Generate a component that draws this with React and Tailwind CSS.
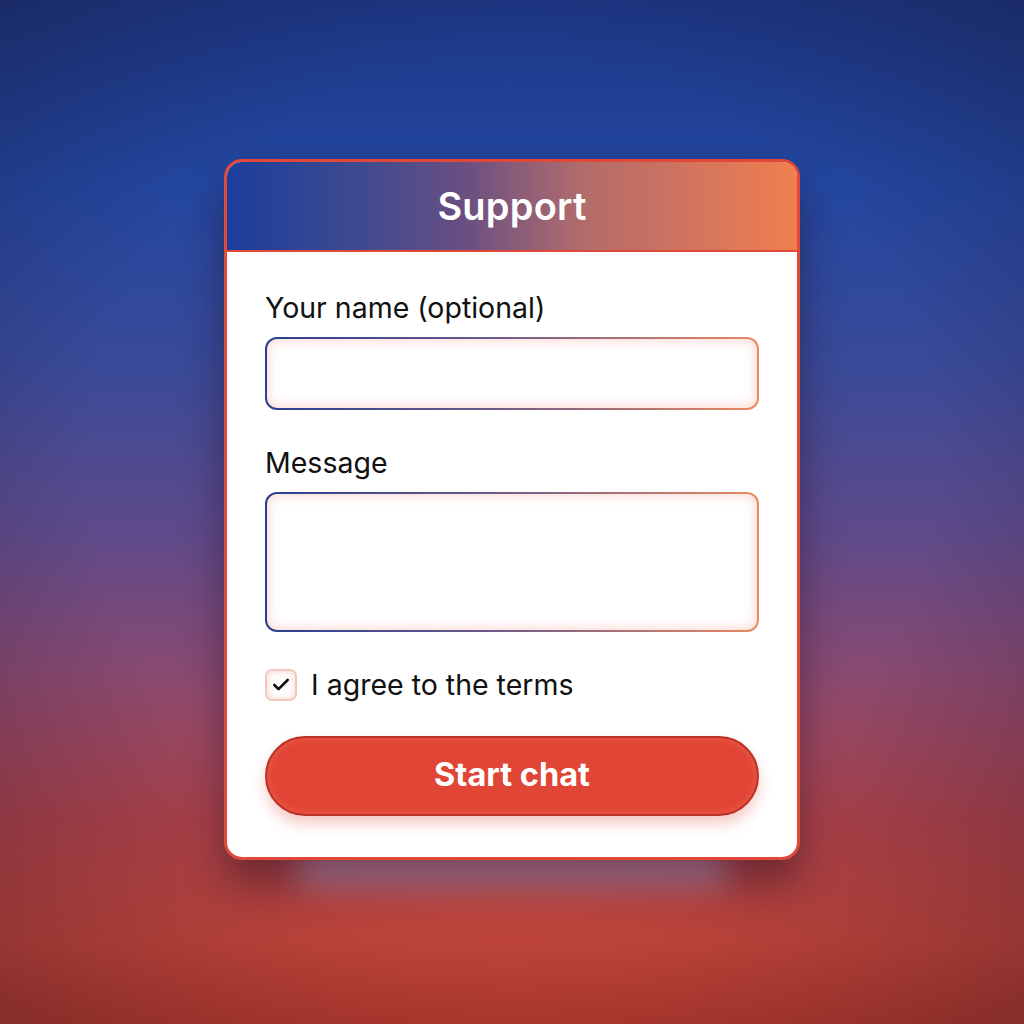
import { Check } from 'lucide-react';

const fieldClass =
  "block w-full rounded-[12px] border-2 border-transparent outline-none [background:linear-gradient(#fff,#fff)_padding-box,linear-gradient(to_right,#2a3f8f,#6a5a8a_45%,#e98a62)_border-box] shadow-[inset_0_0_10px_3px_rgba(240,140,120,0.28)]";

const App = () => {
  return (
    <div
      className="w-full h-[1024px] flex items-center justify-center [background:radial-gradient(ellipse_75%_70%_at_50%_45%,transparent_55%,rgba(20,10,30,0.35)_100%),linear-gradient(to_bottom,#1d3886_0%,#2347a0_18%,#3a4a98_36%,#5e4a8a_52%,#8a4a70_66%,#b0444c_80%,#cf4a3c_92%,#c8402f_100%)]"
      style={{ fontFamily: 'Inter, "Noto Sans", sans-serif' }}
    >
      <div className="relative mb-[6px]">
        <div className="absolute left-[70px] right-[70px] bottom-[-24px] h-[40px] rounded-full bg-[#c8b8e4] opacity-60 blur-[16px]" />
        <div className="relative w-[576px] h-[701px] rounded-[18px] border-[3px] border-[#e0483a] bg-white overflow-hidden shadow-[0_24px_40px_rgba(30,10,30,0.45)]">
          <div className="h-[90px] flex items-center justify-center border-b-2 border-[#e0483a] bg-[linear-gradient(to_right,#1c3d9c_0%,#3c4a90_22%,#6a4f82_42%,#b06c6c_62%,#cd7260_78%,#f0804e_100%)]">
            <h1 className="text-[38px] font-semibold text-white tracking-[0.2px] leading-none">Support</h1>
          </div>
          <div className="px-[38px] pt-[40px] pb-[40px]">
            <label className="block text-[28.5px] leading-[32px] text-[#111]">Your name (optional)</label>
            <input className={`${fieldClass} h-[73px] mt-[13px]`} />
            <label className="block text-[28.5px] leading-[32px] text-[#111] mt-[37px]">Message</label>
            <textarea className={`${fieldClass} h-[140px] mt-[13px] resize-none`} />
            <div className="flex items-center mt-[37px] h-[32px]">
              <div className="w-[32px] h-[32px] rounded-[7px] border-2 border-[#f1c7c0] bg-[#fff] shadow-[inset_0_0_7px_rgba(240,150,130,0.45)] flex items-center justify-center">
                <Check className="w-[20px] h-[20px] text-[#111]" strokeWidth={3.2} />
              </div>
              <span className="ml-[14px] text-[28.5px] leading-[32px] text-[#111]">I agree to the terms</span>
            </div>
            <button className="mt-[35px] w-full h-[80px] rounded-full bg-[#e04535] border-2 border-[#b83428] text-white text-[32.5px] font-bold shadow-[0_8px_14px_rgba(224,80,60,0.3),inset_0_0_8px_rgba(255,120,100,0.5)]">
              Start chat
            </button>
          </div>
        </div>
      </div>
    </div>
  );
};

export default App;
